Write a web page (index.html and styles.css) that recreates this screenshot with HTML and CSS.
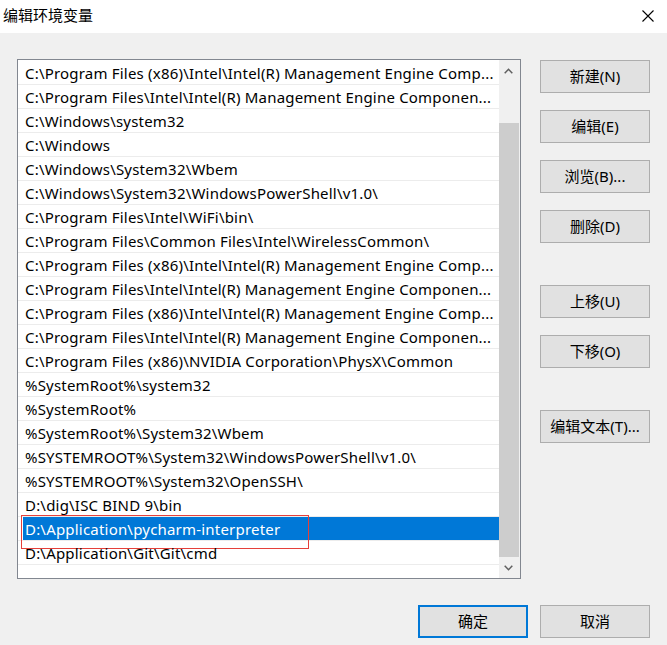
FILE: index.html
```html
<!DOCTYPE html>
<html lang="zh-CN">
<head>
  <meta charset="UTF-8" />
  <title>编辑环境变量</title>
  <link rel="stylesheet" href="styles.css">
</head>
<body>

  <div class="dialog">
    <div class="titlebar">
      <span class="title">编辑环境变量</span>
      <button class="close-btn" aria-label="关闭">
        <svg width="12" height="12" viewBox="0 0 12 12">
          <path d="M0.5 0.5 L11.5 11.5 M11.5 0.5 L0.5 11.5" stroke="#000" stroke-width="1.1" fill="none"/>
        </svg>
      </button>
    </div>

    <div class="content">
      <div class="main">
        <div class="path-list">
          <ul class="rows">
            <li class="row"><span class="cell">C:\Program Files (x86)\Intel\Intel(R) Management Engine Comp...</span></li>
            <li class="row"><span class="cell">C:\Program Files\Intel\Intel(R) Management Engine Componen...</span></li>
            <li class="row"><span class="cell">C:\Windows\system32</span></li>
            <li class="row"><span class="cell">C:\Windows</span></li>
            <li class="row"><span class="cell">C:\Windows\System32\Wbem</span></li>
            <li class="row"><span class="cell">C:\Windows\System32\WindowsPowerShell\v1.0\</span></li>
            <li class="row"><span class="cell">C:\Program Files\Intel\WiFi\bin\</span></li>
            <li class="row"><span class="cell">C:\Program Files\Common Files\Intel\WirelessCommon\</span></li>
            <li class="row"><span class="cell">C:\Program Files (x86)\Intel\Intel(R) Management Engine Comp...</span></li>
            <li class="row"><span class="cell">C:\Program Files\Intel\Intel(R) Management Engine Componen...</span></li>
            <li class="row"><span class="cell">C:\Program Files (x86)\Intel\Intel(R) Management Engine Comp...</span></li>
            <li class="row"><span class="cell">C:\Program Files\Intel\Intel(R) Management Engine Componen...</span></li>
            <li class="row"><span class="cell">C:\Program Files (x86)\NVIDIA Corporation\PhysX\Common</span></li>
            <li class="row"><span class="cell">%SystemRoot%\system32</span></li>
            <li class="row"><span class="cell">%SystemRoot%</span></li>
            <li class="row"><span class="cell">%SystemRoot%\System32\Wbem</span></li>
            <li class="row"><span class="cell">%SYSTEMROOT%\System32\WindowsPowerShell\v1.0\</span></li>
            <li class="row"><span class="cell">%SYSTEMROOT%\System32\OpenSSH\</span></li>
            <li class="row"><span class="cell">D:\dig\ISC BIND 9\bin</span></li>
            <li class="row selected">
              <span class="cell">D:\Application\pycharm-interpreter</span>
              <span class="mark"></span>
            </li>
            <li class="row"><span class="cell">D:\Application\Git\Git\cmd</span></li>
            <li class="row"><span class="cell"></span></li>
          </ul>

          <div class="scrollbar">
            <div class="sb-arrow">
              <svg width="9" height="6" viewBox="0 0 9 6">
                <path d="M0.7 5.3 L4.5 1.3 L8.3 5.3" stroke="#606060" stroke-width="1.5" fill="none"/>
              </svg>
            </div>
            <div class="sb-track"><div class="sb-thumb"></div></div>
            <div class="sb-arrow">
              <svg width="9" height="6" viewBox="0 0 9 6">
                <path d="M0.7 0.7 L4.5 4.7 L8.3 0.7" stroke="#606060" stroke-width="1.5" fill="none"/>
              </svg>
            </div>
          </div>
        </div>

        <div class="side">
          <button class="btn">新建(N)</button>
          <button class="btn">编辑(E)</button>
          <button class="btn">浏览(B)...</button>
          <button class="btn">删除(D)</button>
          <button class="btn group-start">上移(U)</button>
          <button class="btn">下移(O)</button>
          <button class="btn group-start">编辑文本(T)...</button>
        </div>
      </div>

      <div class="footer">
        <button class="btn default">确定</button>
        <button class="btn">取消</button>
      </div>
    </div>
  </div>

</body>
</html>
```

FILE: styles.css
```css
:root {
  --ui-font: "Noto Sans", "Noto Sans CJK SC", sans-serif;
  --face: #f0f0f0;
  --btn-face: #e1e1e1;
  --btn-border: #adadad;
  --accent: #0078d7;
  --list-border: #828790;
}

* {
  box-sizing: border-box;
  margin: 0;
  padding: 0;
}

body {
  font-family: var(--ui-font);
  font-size: 15px;
  color: #000;
  background: var(--face);
  width: 667px;
  height: 645px;
  overflow: hidden;
}

.titlebar {
  height: 33px;
  background: #fff;
  display: flex;
  align-items: center;
  justify-content: space-between;
  padding: 0 13px 0 3px;
}

.title {
  font-size: 15px;
  line-height: 1;
  margin-top: -2px;
}

.close-btn {
  border: none;
  background: none;
  width: 12px;
  height: 12px;
  display: flex;
  margin-top: -2px;
}

.content {
  padding: 26px 17px 0 17px;
}

.main {
  display: flex;
  gap: 19px;
}

/* list of paths */
.path-list {
  width: 504px;
  height: 520px;
  border: 1px solid var(--list-border);
  background: #fff;
  display: flex;
}

.rows {
  list-style: none;
  flex: 1;
  padding-top: 1px;
  overflow: hidden;
}

.row {
  height: 24px;
  border-bottom: 1px solid #ececec;
  position: relative;
  white-space: nowrap;
}

.cell {
  display: block;
  height: 23px;
  line-height: 24px;
  margin-left: 5px;
  padding-left: 2px;
  letter-spacing: 0.2px;
}

.row.selected .cell {
  background: var(--accent);
  color: #fff;
}

.mark {
  position: absolute;
  left: 3px;
  top: -2px;
  width: 288px;
  height: 34px;
  border: 1px solid #e5403a;
}

.scrollbar {
  width: 21px;
  background: var(--face);
  display: flex;
  flex-direction: column;
}

.sb-arrow {
  height: 21px;
  display: flex;
  align-items: center;
  justify-content: center;
  padding-right: 2px;
}

.sb-track {
  flex: 1;
  padding-top: 42px;
  display: flex;
}

.sb-thumb {
  flex: 1;
  background: #cdcdcd;
  margin-right: 1px;
}

/* buttons */
.side {
  display: flex;
  flex-direction: column;
  gap: 17px;
  padding-top: 1px;
}

.side .group-start {
  margin-top: 25px;
}

.btn {
  width: 110px;
  height: 33px;
  font-family: var(--ui-font);
  font-size: 15px;
  color: #000;
  background: var(--btn-face);
  border: 1px solid var(--btn-border);
  line-height: 1;
  white-space: nowrap;
}

.btn.default {
  border: 2px solid var(--accent);
}

.footer {
  display: flex;
  justify-content: flex-end;
  gap: 12px;
  margin-top: 26px;
}
```
